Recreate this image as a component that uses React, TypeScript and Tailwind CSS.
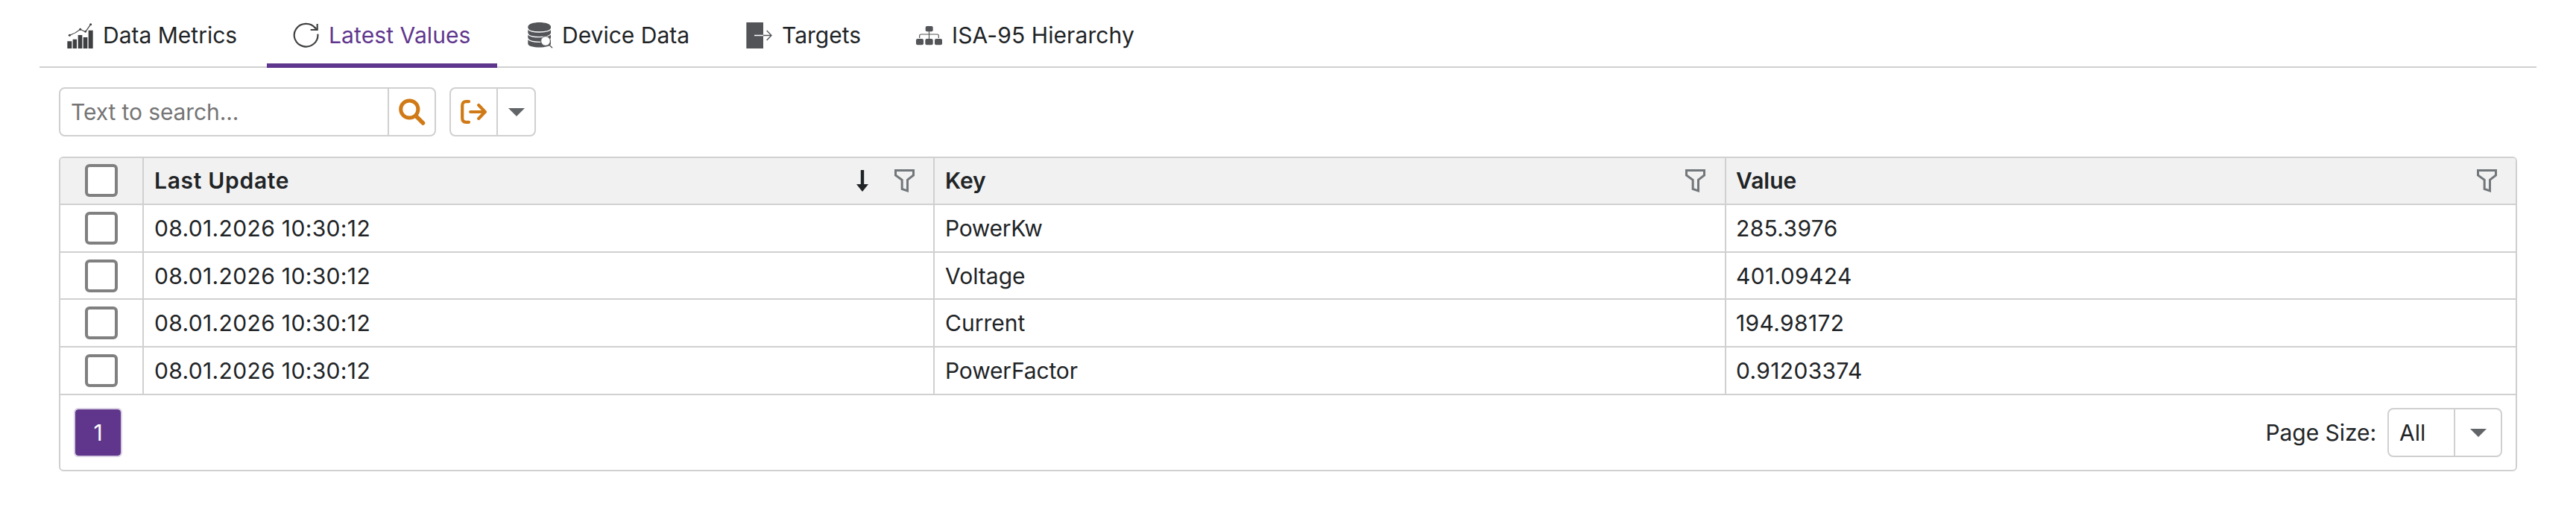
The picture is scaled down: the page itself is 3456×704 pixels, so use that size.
import type { ReactNode } from "react";

function MetricsIcon() {
  return (
    <svg className="size-[35px] shrink-0" viewBox="150 90 105 105" fill="#3f4042">
      <path d="M151 166h18v29h-18zM173 158h16v37h-16zM194 141h17v54h-17zM215 150h17v45h-17zM236 122h18v73h-18z" />
      <path d="M160 142Q184 134 203 118L224 128L245 98" fill="none" stroke="#3f4042" strokeWidth="3.5" />
      <circle cx="160" cy="142" r="4.5" />
      <circle cx="203" cy="118" r="4.5" />
      <circle cx="224" cy="127" r="4" />
      <circle cx="245" cy="98" r="4.5" />
    </svg>
  );
}

function RefreshIcon() {
  return (
    <svg className="size-[35px] shrink-0" viewBox="160 90 105 105" fill="none" stroke="#3f4042" strokeWidth="6.5">
      <path d="M260 137A47.5 46 0 1 1 250 113" />
      <path d="M258 96V120H231" />
      <path d="M246 109L258 120" />
    </svg>
  );
}

function DatabaseIcon() {
  return (
    <svg className="size-[35px] shrink-0" viewBox="445 90 105 105">
      <path d="M446 108C446 84 538 84 538 108V176C538 195 446 195 446 176Z" fill="#525457" />
      <g fill="none" stroke="#fff" strokeWidth="4">
        <path d="M444 114C452 134 532 134 540 114" />
        <path d="M444 134C452 154 532 154 540 134" />
        <path d="M444 154C452 174 532 174 540 154" />
      </g>
      <path d="M528 177L544 193" stroke="#525457" strokeWidth="4" />
      <circle cx="517" cy="165" r="19" fill="#fff" stroke="#525457" strokeWidth="3" />
    </svg>
  );
}

function TargetIcon() {
  return (
    <svg className="size-[35px] shrink-0" viewBox="122 90 105 105" fill="none">
      <rect x="123" y="90" width="68" height="105" fill="#525457" />
      <path d="M155 142.500H191" stroke="#fff" strokeWidth="4.5" />
      <path d="M191 142.500H224M205 123L224 142.500L205 162" stroke="#525457" strokeWidth="4" />
    </svg>
  );
}

function HierarchyIcon() {
  return (
    <svg className="size-[35px] shrink-0" viewBox="807 90 105 105" fill="#525457">
      <rect x="845" y="105" width="30" height="22" rx="6" />
      <rect x="807" y="156" width="30" height="25" rx="6" />
      <rect x="844" y="156" width="31" height="25" rx="6" />
      <rect x="882" y="156" width="30" height="25" rx="6" />
      <path d="M859.500 126V157M821 153V144Q821 138 827 138H892Q898 138 898 144V153" fill="none" stroke="#525457" strokeWidth="3.500" />
    </svg>
  );
}

function SearchIcon() {
  return (
    <svg className="size-9" viewBox="0 0 36 36" fill="none" stroke="#d07a17">
      <circle cx="14.300" cy="14.500" r="11.600" strokeWidth="5" />
      <path d="M23 23.500L32.500 33" strokeWidth="5.500" strokeLinecap="round" />
    </svg>
  );
}

function ExportIcon() {
  return (
    <svg className="h-8 w-[35px]" viewBox="0 0 35 32" fill="none" stroke="#d07a17" strokeWidth="4.200" strokeLinecap="round" strokeLinejoin="round">
      <path d="M11 2.200H7.500Q2.200 2.200 2.200 7.500V24.500Q2.200 29.800 7.500 29.800H11" />
      <path d="M13.200 16H32M24.200 7L32.800 16L24.200 25" />
    </svg>
  );
}

function Caret() {
  return (
    <svg className="h-[11px] w-[22px]" viewBox="0 0 22 11" fill="#626568">
      <path d="M0 0H22L11 11Z" />
    </svg>
  );
}

function FilterIcon() {
  return (
    <svg className="h-[31px] w-[27px]" viewBox="369 501 81 93" fill="none" stroke="#72777b" strokeWidth="9">
      <path d="M373.500 505.500H445.500V525L421.500 543.500V587.500L399.500 580.500V543.500L373.500 525Z" />
    </svg>
  );
}

function SortIcon() {
  return (
    <svg className="mr-[35px] h-[29px] w-4" viewBox="0 0 16 29" fill="#212426">
      <path d="M5.800 0H10.200V19H16L8 29L0 19H5.800Z" />
    </svg>
  );
}

function Checkbox() {
  return <span role="checkbox" aria-checked="false" className="block size-11 rounded-md border-4 border-[#808080] bg-white" />;
}

function Tab({ icon, label, active = false, className }: { icon: ReactNode; label: string; active?: boolean; className: string }) {
  return (
    <button
      role="tab"
      aria-selected={active}
      className={`flex h-full items-center whitespace-nowrap ${active ? "border-b-6 border-[#5f368d] pt-[9px] text-[#5f368d]" : "pt-[3px]"} ${className}`}
    >
      {icon}
      <span>{label}</span>
    </button>
  );
}

const rows = [
  { key: "PowerKw", value: "285.3976", height: "h-16", keyTracking: "-tracking-[0.3px]" },
  { key: "Voltage", value: "401.09424", height: "h-[63px]", keyTracking: "" },
  { key: "Current", value: "194.98172", height: "h-16", keyTracking: "" },
  { key: "PowerFactor", value: "0.91203374", height: "h-16", keyTracking: "-tracking-[0.15px]" },
];

const grid = "grid grid-cols-[112px_1061px_1062px_1059px] border-b-2 border-[#d0d0d0]";
const cell = "flex items-center border-r-2 border-[#d0d0d0] pl-3.5";

export default function App() {
  return (
    <div className="h-[704px] w-[3456px] overflow-hidden bg-white font-[Inter,sans-serif] text-[30px] leading-9 text-[#212426]">
      <div className="mr-[53px] ml-[53px] h-[91px] bg-[linear-gradient(#d0d0d0,#d0d0d0)] bg-[length:100%_2px] bg-bottom bg-no-repeat">
        <div role="tablist" className="flex h-full">
          <Tab className="w-[305px] gap-[13px] pl-[37px]" icon={<MetricsIcon />} label="Data Metrics" />
          <Tab active className="mr-[5px] w-[309px] gap-[13px] pl-[35px] tracking-[0.1px]" icon={<RefreshIcon />} label="Latest Values" />
          <Tab className="w-[293px] gap-[11px] pl-9" icon={<DatabaseIcon />} label="Device Data" />
          <Tab className="w-[228px] gap-[13px] pl-9" icon={<TargetIcon />} label="Targets" />
          <Tab className="w-[330px] gap-[13px] pl-9 tracking-[0.1px]" icon={<HierarchyIcon />} label="ISA-95 Hierarchy" />
        </div>
      </div>

      <div className="mt-[26px] ml-[79px] flex h-[66px] gap-[18px]">
        <div className="flex w-[506px] rounded-lg border-2 border-[#d0d0d0]">
          <input placeholder="Text to search..." className="min-w-0 flex-1 pl-3.5 tracking-[-0.1px] outline-none placeholder:text-[#757575]" />
          <button className="flex w-[63px] items-center justify-center border-l-2 border-[#d0d0d0]">
            <SearchIcon />
          </button>
        </div>
        <div className="flex w-[116px] rounded-lg border-2 border-[#d0d0d0]">
          <button className="flex w-[61px] items-center justify-center">
            <ExportIcon />
          </button>
          <button className="flex flex-1 items-center justify-center border-l-2 border-[#d0d0d0]">
            <Caret />
          </button>
        </div>
      </div>

      <div className="mt-[27px] ml-[79px] h-[422px] w-[3298px] overflow-hidden rounded-md border-2 border-[#d0d0d0]">
        <div className={`${grid} h-[63px] bg-[#f1f1f1] font-semibold`}>
          <div className="flex items-start justify-center border-r-2 border-[#d0d0d0] pt-2">
            <Checkbox />
          </div>
          <div className={`${cell} pr-[25px] pb-px tracking-[0.7px]`}>
            <span className="flex-1">Last Update</span>
            <SortIcon />
            <FilterIcon />
          </div>
          <div className={`${cell} justify-between pr-[26px] pb-px`}>
            <span>Key</span>
            <FilterIcon />
          </div>
          <div className="flex items-center justify-between pr-[25px] pb-px pl-[13px]">
            <span>Value</span>
            <FilterIcon />
          </div>
        </div>
        {rows.map((row) => (
          <div key={row.key} className={`${grid} ${row.height}`}>
            <div className="flex items-center justify-center border-r-2 border-[#d0d0d0]">
              <Checkbox />
            </div>
            <div className={`${cell} tracking-[0.35px]`}>08.01.2026 10:30:12</div>
            <div className={`${cell} ${row.keyTracking}`}>{row.key}</div>
            <div className="flex items-center pl-[13px] tracking-[0.35px]">{row.value}</div>
          </div>
        ))}
        <div className="flex h-[100px] items-center justify-between px-[18px]">
          <button className="flex h-[66px] w-[65px] items-center justify-center rounded-md border-2 border-[#d9cfe3] bg-[#5f368b] bg-clip-padding text-white">1</button>
          <div className="flex items-center gap-[15px]">
            <span className="-tracking-[0.05px]">Page Size:</span>
            <div className="flex h-[66px] w-[154px] rounded-lg border-2 border-[#d0d0d0]">
              <span className="flex flex-1 items-center pl-3.5">All</span>
              <button className="flex w-[63px] items-center justify-center border-l-2 border-[#d0d0d0]">
                <Caret />
              </button>
            </div>
          </div>
        </div>
      </div>
    </div>
  );
}
